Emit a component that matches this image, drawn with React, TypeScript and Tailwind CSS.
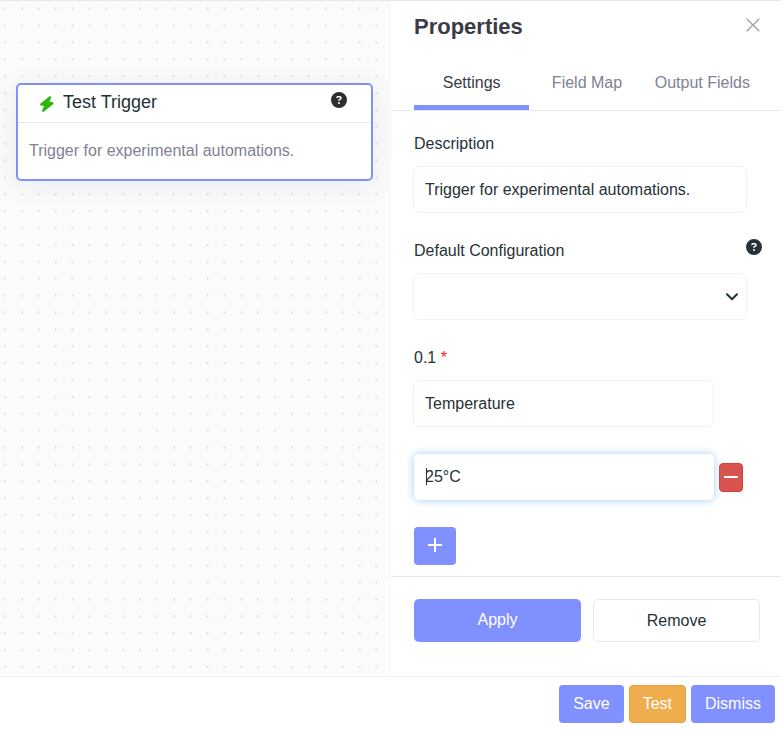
import { useState } from "react";
import { FaCircleQuestion } from "react-icons/fa6";

const TABS = ["Settings", "Field Map", "Output Fields"];

const inputClass =
  "h-[47px] w-full rounded-[6px] border border-[#edf5f5] bg-white px-[11px] text-base text-[#263238] outline-none";

function BoltIcon() {
  return (
    <svg
      width="14"
      height="16"
      viewBox="0 0 14 16"
      fill="#2bb80b"
      stroke="#2bb80b"
      strokeWidth="1.2"
      strokeLinejoin="round"
      aria-hidden="true"
    >
      <path d="M9.9 0.7 0.7 8.2 1 9 4.9 9.4 2.6 15 3.4 15.2 12.9 7.5 12.6 6.7 8.6 6.3 10.7 1Z" />
    </svg>
  );
}

function DotGrid() {
  return (
    <svg className="absolute inset-0 h-full w-full" aria-hidden="true">
      <defs>
        <pattern id="dots" x="-3.5" y="-1.5" width="16.88" height="16.88" patternUnits="userSpaceOnUse">
          <circle cx="8.5" cy="9.2" r="0.9" fill="#d4d4d4" />
        </pattern>
      </defs>
      <rect width="100%" height="100%" fill="url(#dots)" />
    </svg>
  );
}

function TriggerCard() {
  return (
    <div className="relative rounded-[5px] border-2 border-[#8190ff] bg-white shadow-[0_4px_30px_rgba(22,33,74,0.08)]">
      <div className="flex items-center border-b border-[#e8e8ef] pt-[3px] pr-6 pb-[6px] pl-[22px]">
        <span className="pt-1">
          <BoltIcon />
        </span>
        <h2 className="flex-1 pl-[9px] text-[18px] leading-7 text-[#253134]">Test Trigger</h2>
        <button type="button" aria-label="Trigger help" className="pb-1 text-[#2d2d2d]">
          <FaCircleQuestion size={16} />
        </button>
      </div>
      <p className="px-[11px] py-4 text-base text-[#808292]">
        Trigger for experimental automations.
      </p>
    </div>
  );
}

function PropertiesPanel() {
  const [tab, setTab] = useState("Settings");
  const [description, setDescription] = useState("Trigger for experimental automations.");
  const [name, setName] = useState("Temperature");
  const [value, setValue] = useState("25°C");

  return (
    <aside className="flex w-[390px] shrink-0 flex-col bg-white">
      <div className="border-b border-[#e8e8ef] pr-[21px] pl-[23px]">
        <div className="flex items-start justify-between pt-[10px]">
          <h1 className="text-[22px] leading-8 font-bold text-[#393c44]">Properties</h1>
          <button type="button" aria-label="Close" className="pt-[7px]">
            <svg width="14" height="14" viewBox="0 0 14 14" stroke="#a0a1b2" strokeWidth="1.4" fill="none">
              <path d="M0.7 0.7 13.3 13.3M13.3 0.7 0.7 13.3" />
            </svg>
          </button>
        </div>
        <div role="tablist" className="grid grid-cols-3 pt-7">
          {TABS.map((item) => (
            <button
              key={item}
              type="button"
              role="tab"
              aria-selected={item === tab}
              onClick={() => setTab(item)}
              className={`border-b-[5px] pb-[10px] text-base whitespace-nowrap ${
                item === tab ? "border-[#8190ff] text-[#393c44]" : "border-transparent text-[#808292]"
              }`}
            >
              {item}
            </button>
          ))}
        </div>
      </div>

      <form className="flex flex-1 flex-col gap-[26px] pt-[21px] pr-[34px] pb-[11px] pl-[22px] text-[#263238]">
        <div className="flex flex-col gap-[10px]">
          <label htmlFor="description" className="pl-px">
            Description
          </label>
          <input
            id="description"
            className={inputClass}
            value={description}
            onChange={(e) => setDescription(e.target.value)}
          />
        </div>

        <div className="flex flex-col gap-[10px]">
          <div className="-mr-[15px] flex items-start justify-between pl-px">
            <label htmlFor="configuration">Default Configuration</label>
            <button type="button" aria-label="Configuration help">
              <FaCircleQuestion size={16} />
            </button>
          </div>
          <div className="relative">
            <select id="configuration" className={`${inputClass} appearance-none`}>
              <option value=""></option>
            </select>
            <svg
              className="pointer-events-none absolute top-5 right-2"
              width="14"
              height="8"
              viewBox="0 0 14 8"
              fill="none"
              stroke="#263238"
              strokeWidth="2"
              strokeLinecap="round"
              strokeLinejoin="round"
            >
              <path d="M2 1.3 7 6.2 12 1.3" />
            </svg>
          </div>
        </div>

        <div>
          <label htmlFor="field-name" className="pl-px">
            0.1 <span className="text-[#ff1a1a]">*</span>
          </label>
          <div className="pt-[10px] pr-[33px]">
            <input
              id="field-name"
              className={inputClass}
              value={name}
              onChange={(e) => setName(e.target.value)}
            />
          </div>
          <div className="flex items-center gap-[5px] pt-[27px] pr-1 pl-px">
            <div className="relative flex-1">
              <input
                aria-label="Field value"
                className="block h-[46px] w-full rounded-[5px] bg-white px-[11px] text-base text-[#263238] shadow-[0_0_8px_rgba(102,175,233,0.6)] outline-none"
                value={value}
                onChange={(e) => setValue(e.target.value)}
              />
              <span className="absolute top-[14px] left-3 h-[17px] w-px bg-[#263238]" />
            </div>
            <button
              type="button"
              aria-label="Remove field"
              className="flex h-[29px] w-6 items-center justify-center rounded-[4px] border border-[#d43f3a] bg-[#d9534f]"
            >
              <span className="h-[2px] w-[14px] bg-white" />
            </button>
          </div>
          <div className="pt-[27px] pl-px">
            <button
              type="button"
              aria-label="Add field"
              className="flex h-[38px] w-[42px] items-center justify-center rounded-[4px] bg-[#8190ff] pb-[2px]"
            >
              <svg width="14" height="14" viewBox="0 0 14 14" stroke="#fff" strokeWidth="2">
                <path d="M7 0V14M0 7H14" />
              </svg>
            </button>
          </div>
        </div>
      </form>

      <div className="grid grid-cols-2 gap-3 border-t border-[#e8e8ef] pt-[22px] pr-[21px] pb-[34px] pl-[23px]">
        <button type="button" className="h-[43px] rounded-[5px] bg-[#8190ff] pb-[2px] text-base text-white">
          Apply
        </button>
        <button
          type="button"
          className="h-[43px] rounded-[5px] border border-[#e8e8ef] bg-white text-base text-[#253134]"
        >
          Remove
        </button>
      </div>
    </aside>
  );
}

export default function App() {
  return (
    <div className="flex min-h-screen flex-col border-t border-[#e8e8ef] bg-white font-['Liberation_Sans',Arial,sans-serif] text-base">
      <main className="flex flex-1">
        <section className="relative flex-1 overflow-hidden bg-[#fbfbfb] pt-[82px] pr-[18px] pl-4">
          <DotGrid />
          <TriggerCard />
        </section>
        <PropertiesPanel />
      </main>
      <footer className="flex justify-end gap-[5px] border-t border-[#f1f1f1] pt-2 pr-[6px] pb-[7px] text-white">
        <button type="button" className="h-[38px] rounded-[4px] bg-[#8190ff] px-[14px]">
          Save
        </button>
        <button
          type="button"
          className="h-[38px] rounded-[4px] border border-[#eea236] bg-[#f0ad4e] px-[13px]"
        >
          Test
        </button>
        <button type="button" className="h-[38px] rounded-[4px] bg-[#8190ff] px-[14px]">
          Dismiss
        </button>
      </footer>
    </div>
  );
}
